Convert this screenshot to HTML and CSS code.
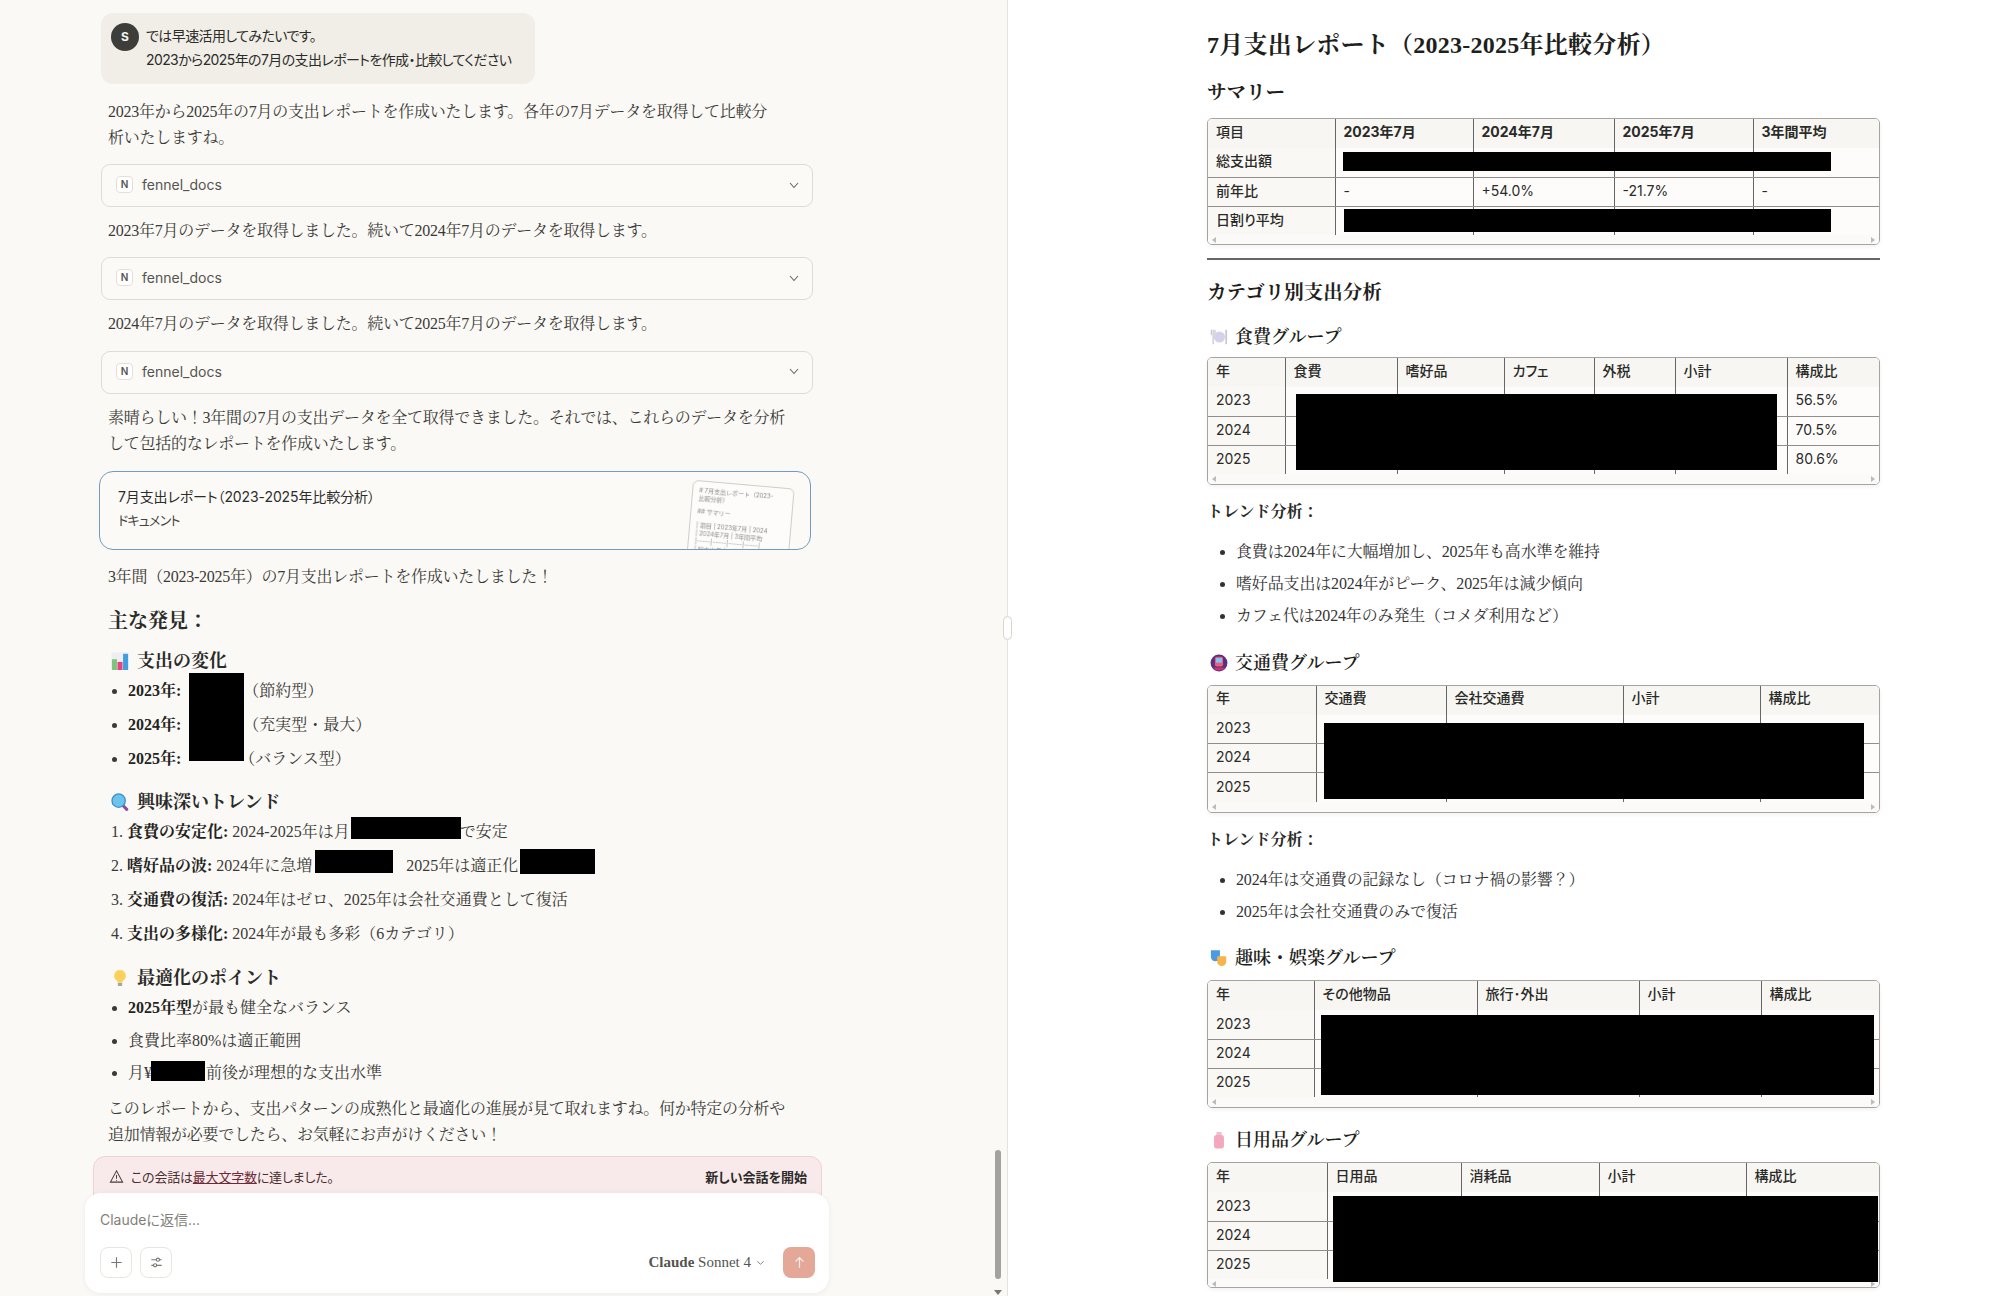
FILE: index.html
```html
<!DOCTYPE html>
<html lang="ja">
<head>
<meta charset="utf-8">
<title>7月支出レポート</title>
<link rel="stylesheet" href="styles.css">
</head>
<body>
<div class="app">
  <main class="chat">
    <div class="thread">
      <div class="bubble">
        <span class="avatar">S</span>
        <div class="bubble-text">では早速活用してみたいです。<br>2023から2025年の7月の支出レポートを作成・比較してください</div>
      </div>
      <p class="msg m-a">2023年から2025年の7月の支出レポートを作成いたします。各年の7月データを取得して比較分<br>析いたしますね。</p>
      <div class="tool"><span class="tool-n">N</span><span class="tool-name">fennel_docs</span><svg class="chev" viewBox="0 0 12 12"><path d="M2 4l4 4.5L10 4"/></svg></div>
      <p class="msg">2023年7月のデータを取得しました。続いて2024年7月のデータを取得します。</p>
      <div class="tool"><span class="tool-n">N</span><span class="tool-name">fennel_docs</span><svg class="chev" viewBox="0 0 12 12"><path d="M2 4l4 4.5L10 4"/></svg></div>
      <p class="msg">2024年7月のデータを取得しました。続いて2025年7月のデータを取得します。</p>
      <div class="tool"><span class="tool-n">N</span><span class="tool-name">fennel_docs</span><svg class="chev" viewBox="0 0 12 12"><path d="M2 4l4 4.5L10 4"/></svg></div>
      <p class="msg">素晴らしい！3年間の7月の支出データを全て取得できました。それでは、これらのデータを分析<br>して包括的なレポートを作成いたします。</p>
      <div class="artifact">
        <div class="artifact-text">
          <div class="artifact-title">7月支出レポート（2023-2025年比較分析）</div>
          <div class="artifact-sub">ドキュメント</div>
        </div>
        <div class="thumb">
          <div class="thumb-h"># 7月支出レポート（2023-<br>比較分析）</div>
          <div class="thumb-s">## サマリー</div>
          <div class="thumb-t">| 項目 | 2023年7月 | 2024<br>| 2024年7月 | 3年間平均<br>|-----|-----|-----|-----|<br>| 総支出額 | ... |</div>
        </div>
      </div>
      <p class="msg m-b">3年間（2023-2025年）の7月支出レポートを作成いたしました！</p>
      <h2 class="find">主な発見：</h2>
      <h3 class="sub"><svg class="emoji" viewBox="0 0 20 20"><rect x="0.500" y="0.500" width="19" height="19" fill="#efeff2"/><rect x="1" y="8" width="5.600" height="12" fill="#7cc47f"/><rect x="7.200" y="11" width="5.600" height="9" fill="#e8437c"/><rect x="13.400" y="2" width="5.600" height="18" fill="#3f9fe0"/></svg>支出の変化</h3>
      <div class="rel">
        <ul class="list tight-a">
          <li><b>2023年:</b><span class="gap-a"></span>（節約型）</li>
          <li><b>2024年:</b><span class="gap-a"></span>（充実型・最大）</li>
          <li><b>2025年:</b><span class="gap-b"></span>（バランス型）</li>
        </ul>
        <span class="redact r-spend"></span>
      </div>
      <h3 class="sub s2"><svg class="emoji" viewBox="0 0 20 20"><path d="M12.500 13l5 5.200" stroke="#8a4fa0" stroke-width="3.400" stroke-linecap="round"/><circle cx="8.500" cy="8.500" r="7.400" fill="#6cc4ee" stroke="#3a8fc4" stroke-width="1.400"/></svg>興味深いトレンド</h3>
      <div class="rel">
        <ol class="list numbered">
          <li><b>食費の安定化:</b> 2024-2025年は月<span class="gap-c"></span>で安定</li>
          <li><b>嗜好品の波:</b> 2024年に急増<span class="gap-d"></span>2025年は適正化</li>
          <li><b>交通費の復活:</b> 2024年はゼロ、2025年は会社交通費として復活</li>
          <li><b>支出の多様化:</b> 2024年が最も多彩（6カテゴリ）</li>
        </ol>
        <span class="redact r-food"></span>
        <span class="redact r-wave1"></span>
        <span class="redact r-wave2"></span>
      </div>
      <h3 class="sub s3"><svg class="emoji" viewBox="0 0 20 20"><path d="M10 1a6.400 6.400 0 0 0-3.600 11.700c.8.600 1 1.400 1 2.300h5.200c0-.9.200-1.700 1-2.300A6.400 6.400 0 0 0 10 1z" fill="#fbd15b"/><rect x="7.600" y="15.400" width="4.800" height="3.600" rx="1" fill="#a5a5a5"/></svg>最適化のポイント</h3>
      <div class="rel">
        <ul class="list tight-b">
          <li><b>2025年型</b>が最も健全なバランス</li>
          <li>食費比率80%は適正範囲</li>
          <li>月¥<span class="gap-e"></span>前後が理想的な支出水準</li>
        </ul>
        <span class="redact r-ideal"></span>
      </div>
      <p class="msg m-c">このレポートから、支出パターンの成熟化と最適化の進展が見て取れますね。何か特定の分析や<br>追加情報が必要でしたら、お気軽にお声がけください！</p>
    </div>

    <div class="alert">
      <svg class="alert-icon" viewBox="0 0 16 16"><path d="M8 2L1.500 14h13z"/><path d="M8 6.500v4M8 11.800v.8"/></svg>
      <span class="alert-text">この会話は<u>最大文字数</u>に達しました。</span>
      <span class="alert-action">新しい会話を開始</span>
    </div>
    <div class="composer">
      <div class="placeholder">Claudeに返信...</div>
      <div class="composer-row">
        <span class="icon-btn"><svg viewBox="0 0 16 16"><path d="M8 2.500v11M2.500 8h11"/></svg></span>
        <span class="icon-btn"><svg viewBox="0 0 16 16"><path d="M2.500 5h11M2.500 11h11"/><circle cx="9.500" cy="5" r="1.700" fill="#fff"/><circle cx="6.500" cy="11" r="1.700" fill="#fff"/></svg></span>
        <span class="model"><span class="model-a">Claude</span> Sonnet 4<svg viewBox="0 0 12 12"><path d="M2.500 4.500L6 8l3.500-3.500"/></svg></span>
        <span class="send"><svg viewBox="0 0 16 16"><path d="M8 13.500V3M3.800 7L8 2.800 12.200 7"/></svg></span>
      </div>
    </div>
    <div class="scrollbar"></div>
    <div class="scroll-arrow"></div>
  </main>

  <div class="divider"><span class="handle"></span></div>

  <article class="doc">
    <h1 class="doc-title">7月支出レポート（2023-2025年比較分析）</h1>
    <h2 class="doc-h2">サマリー</h2>
    <div class="tbl t-sum">
      <table>
        <colgroup><col class="c1"><col class="c2"><col class="c3"><col class="c4"><col></colgroup>
        <thead><tr><th class="plain">項目</th><th>2023年7月</th><th>2024年7月</th><th>2025年7月</th><th>3年間平均</th></tr></thead>
        <tbody>
          <tr><th>総支出額</th><td></td><td></td><td></td><td></td></tr>
          <tr><th>前年比</th><td>-</td><td>+54.0%</td><td>-21.7%</td><td>-</td></tr>
          <tr><th>日割り平均</th><td></td><td></td><td></td><td></td></tr>
        </tbody>
      </table>
      <div class="hscroll"><i class="al"></i><i class="ar"></i></div>
      <span class="redact r-s1"></span>
      <span class="redact r-s2"></span>
    </div>
    <hr class="rule">
    <h2 class="doc-h2 after-rule">カテゴリ別支出分析</h2>

    <h3 class="doc-h3"><svg class="emoji" viewBox="0 0 20 20"><path d="M1.500 2v6M3.500 2v16M5.500 2v6" stroke="#c9c9cf" stroke-width="1.400"/><circle cx="10.500" cy="10" r="6.200" fill="#d6d0ea"/><path d="M18 2v16" stroke="#c9c9cf" stroke-width="2"/></svg>食費グループ</h3>
    <div class="tbl t-food">
      <table>
        <colgroup><col class="c1"><col class="c2"><col class="c3"><col class="c4"><col class="c5"><col class="c6"><col></colgroup>
        <thead><tr><th>年</th><th>食費</th><th>嗜好品</th><th>カフェ</th><th>外税</th><th>小計</th><th>構成比</th></tr></thead>
        <tbody>
          <tr><td>2023</td><td></td><td></td><td></td><td></td><td></td><td>56.5%</td></tr>
          <tr><td>2024</td><td></td><td></td><td></td><td></td><td></td><td>70.5%</td></tr>
          <tr><td>2025</td><td></td><td></td><td></td><td></td><td></td><td>80.6%</td></tr>
        </tbody>
      </table>
      <div class="hscroll"><i class="al"></i><i class="ar"></i></div>
      <span class="redact r-t-food"></span>
    </div>
    <p class="trend">トレンド分析：</p>
    <ul class="doc-list">
      <li>食費は2024年に大幅増加し、2025年も高水準を維持</li>
      <li>嗜好品支出は2024年がピーク、2025年は減少傾向</li>
      <li>カフェ代は2024年のみ発生（コメダ利用など）</li>
    </ul>

    <h3 class="doc-h3 h-b"><svg class="emoji" viewBox="0 0 20 20"><circle cx="10" cy="10" r="9.400" fill="#5b2f7e"/><path d="M3 15a9 9 0 0 0 14 0z" fill="#c8326e"/><rect x="5.500" y="3" width="9" height="11" rx="2" fill="#ef5d7d"/><rect x="6.600" y="4.600" width="6.800" height="5" fill="#7ec7ee"/></svg>交通費グループ</h3>
    <div class="tbl t-trans">
      <table>
        <colgroup><col class="c1"><col class="c2"><col class="c3"><col class="c4"><col></colgroup>
        <thead><tr><th>年</th><th>交通費</th><th>会社交通費</th><th>小計</th><th>構成比</th></tr></thead>
        <tbody>
          <tr><td>2023</td><td></td><td></td><td></td><td></td></tr>
          <tr><td>2024</td><td></td><td></td><td></td><td></td></tr>
          <tr><td>2025</td><td></td><td></td><td></td><td></td></tr>
        </tbody>
      </table>
      <div class="hscroll"><i class="al"></i><i class="ar"></i></div>
      <span class="redact r-t-trans"></span>
    </div>
    <p class="trend">トレンド分析：</p>
    <ul class="doc-list">
      <li>2024年は交通費の記録なし（コロナ禍の影響？）</li>
      <li>2025年は会社交通費のみで復活</li>
    </ul>

    <h3 class="doc-h3 h-b"><svg class="emoji" viewBox="0 0 20 20"><path d="M1 1.500h10v7c0 3-2.200 5-5 5s-5-2-5-5z" fill="#4a9be0"/><path d="M8 8h10v6.500c0 2.500-2.200 4.500-5 4.500s-5-2-5-4.500z" fill="#f5b54a"/></svg>趣味・娯楽グループ</h3>
    <div class="tbl t-fun">
      <table>
        <colgroup><col class="c1"><col class="c2"><col class="c3"><col class="c4"><col></colgroup>
        <thead><tr><th>年</th><th>その他物品</th><th>旅行･外出</th><th>小計</th><th>構成比</th></tr></thead>
        <tbody>
          <tr><td>2023</td><td></td><td></td><td></td><td></td></tr>
          <tr><td>2024</td><td></td><td></td><td></td><td></td></tr>
          <tr><td>2025</td><td></td><td></td><td></td><td></td></tr>
        </tbody>
      </table>
      <div class="hscroll"><i class="al"></i><i class="ar"></i></div>
      <span class="redact r-t-fun"></span>
    </div>

    <h3 class="doc-h3 h-c"><svg class="emoji" viewBox="0 0 20 20"><rect x="7" y="1" width="6" height="4" rx="1" fill="#f0c0cc"/><rect x="4.500" y="4.500" width="11" height="15" rx="3" fill="#f3a8bd"/></svg>日用品グループ</h3>
    <div class="tbl t-daily">
      <table>
        <colgroup><col class="c1"><col class="c2"><col class="c3"><col class="c4"><col></colgroup>
        <thead><tr><th>年</th><th>日用品</th><th>消耗品</th><th>小計</th><th>構成比</th></tr></thead>
        <tbody>
          <tr><td>2023</td><td></td><td></td><td></td><td></td></tr>
          <tr><td>2024</td><td></td><td></td><td></td><td></td></tr>
          <tr><td>2025</td><td></td><td></td><td></td><td></td></tr>
        </tbody>
      </table>
      <div class="hscroll"><i class="al"></i><i class="ar"></i></div>
      <span class="redact r-t-daily"></span>
    </div>
  </article>
</div>
</body>
</html>
```
FILE: styles.css
```css
:root {
  --serif: "Liberation Serif", "Noto Serif CJK JP", "Noto Sans CJK JP", serif;
  --sans: "Inter", "Noto Sans CJK JP", sans-serif;
  --ink: #3a3a37;
}
* { box-sizing: border-box; }
html, body { margin: 0; height: 100%; overflow: hidden; }
body { background: #fff; color: var(--ink); font-family: var(--serif); }
.app { display: flex; width: 1998px; height: 1296px; }

/* Left: chat */
.chat { position: relative; width: 1007px; height: 1296px; background: #faf9f5; overflow: hidden; flex: none; }
.thread { display: flex; flex-direction: column; align-items: flex-start; padding: 13px 0 0 101px; width: 820px; }
.bubble { display: flex; gap: 7px; width: 434px; height: 71px; padding: 11px 10px 10px; background: #f0eee6; border-radius: 12px; }
.avatar { flex: none; width: 28px; height: 28px; margin-top: -1px; border-radius: 50%; background: #3d3d3a; color: #f5f4ef; font: 700 12px/28px var(--sans); text-align: center; }
.bubble-text { font: 14px/24px var(--sans); font-feature-settings: "palt"; color: #2c2c2a; white-space: nowrap; letter-spacing: -.6px; }
.msg { margin: 11px 0 0 7px; font-size: 16px; line-height: 26px; white-space: nowrap; letter-spacing: -.25px; }
.m-a { margin-top: 15px; }
.m-b { margin-top: 14.200px; }
.m-c { margin-top: 9.800px; }
.tool { display: flex; align-items: center; width: 712px; height: 43px; margin-top: 13.200px; padding: 0 12px 2px 14px; border: 1px solid #dedcd4; border-radius: 9px; background: #fbfaf7; }
.tool-n { width: 17px; height: 17px; margin-right: 9px; border: 1px solid #e2e0d8; border-radius: 4px; background: #fff; font: 600 10px/15px var(--sans); text-align: center; color: #555; }
.tool-name { font: 14px var(--sans); color: #55544f; }
.chev { width: 12px; height: 12px; margin-left: auto; margin-right: 0; fill: none; stroke: #666; stroke-width: 1.100; }
.artifact { position: relative; display: flex; width: 712px; height: 79px; margin-top: 14px; margin-left: -2px; padding: 13px 18px; border: 1.500px solid #6f9cc0; border-radius: 14px; background: #fbfaf7; overflow: hidden; }
.artifact-title { font: 14px/24px var(--sans); font-feature-settings: "palt"; color: #2c2c2a; white-space: nowrap; letter-spacing: -.1px; }
.artifact-sub { font: 13px/22px var(--sans); font-feature-settings: "palt"; color: #45443f; letter-spacing: -.8px; }
.thumb { position: absolute; left: 589px; top: 12px; width: 102px; height: 90px; padding: 5px 6px; border: 1px solid #cfcdc6; border-radius: 6px; background: #fdfcfa; transform: rotate(5deg); font: 6px/8px var(--sans); color: #8b8a85; white-space: nowrap; overflow: hidden; filter: blur(.3px); }
.thumb-s { margin-top: 5px; }
.thumb-t { margin-top: 6px; }
.find { margin: 17.500px 0 0 7px; font-size: 20px; line-height: 28px; font-weight: 700; color: #2b2b29; }
.sub { display: flex; align-items: center; gap: 8px; margin: 11.500px 0 0 10px; font-size: 18px; line-height: 28px; font-weight: 700; color: #2b2b29; }
.s2 { margin-top: 16px; }
.s3 { margin-top: 17px; }
.emoji { flex: none; width: 18px; height: 18px; }
.rel { position: relative; width: 720px; }
.list { margin: 3.400px 0 0; padding: 0 0 0 27px; font-size: 16px; line-height: 26px; }
.list li { margin-bottom: 7.800px; white-space: nowrap; }
.list li:last-child { margin-bottom: 0; }
.list b { color: #232321; }
.tight-b { margin-top: 3px; }
.tight-b li { margin-bottom: 6.500px; }
.numbered { padding-left: 10px; list-style-position: inside; }
.numbered li { margin-bottom: 8px; }
.gap-a { display: inline-block; width: 62px; }
.gap-b { display: inline-block; width: 58px; }
.gap-c { display: inline-block; width: 110px; }
.gap-d { display: inline-block; width: 94px; }
.gap-e { display: inline-block; width: 54px; }
.redact { position: absolute; background: #000; }
.r-spend { left: 88px; top: -2px; width: 55px; height: 88px; }
.r-food { left: 250px; top: 1px; width: 110px; height: 22px; }
.r-wave1 { left: 214px; top: 34px; width: 78px; height: 23px; }
.r-wave2 { left: 419px; top: 33px; width: 75px; height: 25px; }
.r-ideal { left: 50px; top: 69px; width: 54px; height: 20px; }

.alert { position: absolute; left: 93px; top: 1156px; display: flex; align-items: center; width: 729px; height: 60px; padding: 0 14px 20px 15px; background: #f8eaea; border: 1px solid #ecd4d4; border-radius: 12px; font: 13px var(--sans); font-feature-settings: "palt"; color: #4a2f2f; }
.alert-icon { width: 15px; height: 15px; margin-right: 7px; fill: none; stroke: #4a3a3a; stroke-width: 1.100; }
.alert-text { letter-spacing: -.2px; }
.alert-text u { color: #6b2a36; }
.alert-action { margin-left: auto; font-weight: 600; color: #2b2b29; }
.composer { position: absolute; left: 85px; top: 1193px; display: flex; flex-direction: column; width: 744px; height: 100px; padding: 16px 14px 15px 15px; background: #fff; border-radius: 16px; box-shadow: 0 1px 6px rgba(0, 0, 0, .06); }
.placeholder { font: 14px/22px var(--sans); font-feature-settings: "palt"; color: #807f79; }
.composer-row { display: flex; align-items: center; gap: 8px; margin-top: auto; }
.icon-btn { display: flex; align-items: center; justify-content: center; width: 32px; height: 31px; border: 1px solid #e8e6df; border-radius: 8px; background: #fff; }
.icon-btn svg { width: 15px; height: 15px; fill: none; stroke: #77766f; stroke-width: 1.200; }
.model { display: flex; align-items: center; margin-left: auto; margin-right: 9px; font: 15px var(--serif); color: #55544f; white-space: pre; }
.model-a { font-weight: 600; }
.model svg { width: 11px; height: 11px; margin-left: 4px; fill: none; stroke: #777; stroke-width: 1; }
.send { display: flex; align-items: center; justify-content: center; width: 32px; height: 31px; border-radius: 8px; background: #e3a898; }
.send svg { width: 15px; height: 15px; fill: none; stroke: #fbeee9; stroke-width: 1.300; }
.scrollbar { position: absolute; left: 995px; top: 1150px; width: 6px; height: 129px; border-radius: 3px; background: #a3a29d; }
.scroll-arrow { position: absolute; left: 994px; top: 1290px; border: 4px solid transparent; border-top: 5px solid #777; }

/* Divider */
.divider { position: relative; flex: none; width: 1px; background: #e4e2dc; }
.handle { position: absolute; left: -4px; top: 616px; width: 9px; height: 24px; border: 1px solid #d6d4cd; border-radius: 5px; background: #fff; }

/* Right: doc */
.doc { flex: 1; padding: 28px 118px 0 199px; background: #fff; color: #222; }
.doc-title { margin: 0; font-size: 24px; line-height: 34px; font-weight: 700; white-space: nowrap; color: #1f1f1d; letter-spacing: .25px; }
.doc-h2 { margin: 17px 0 11px; font-size: 19.500px; line-height: 28px; font-weight: 700; color: #1f1f1d; }
.after-rule { margin: 19px 0 0; }
.doc-h3 { display: flex; align-items: center; gap: 7px; margin: 16px 0 6px 3px; font-size: 18px; line-height: 28px; font-weight: 600; color: #1f1f1d; }
.h-b { margin-top: 20px; margin-bottom: 8px; }
.h-c { margin-top: 18px; margin-bottom: 8px; }
.rule { height: 2px; margin: 13px 0 0; border: 0; background: #666; }
.trend { margin: 14px 0 0; font-size: 16px; line-height: 26px; font-weight: 700; color: #2a2a28; }
.doc-list { margin: 14px 0 0; padding: 0 0 0 29px; font-size: 16px; line-height: 25.600px; color: #333; letter-spacing: -.15px; }
.doc-list li { margin-bottom: 6.500px; white-space: nowrap; }
.doc-list li:last-child { margin-bottom: 0; }

.tbl { position: relative; width: 673px; height: 128px; border: 1px solid #a5a4a0; border-radius: 5px; overflow: hidden; background: #fdfcfb; box-shadow: 0 2px 4px rgba(0, 0, 0, .05); }
.t-sum { height: 127px; }
.t-daily { height: 126px; }
.tbl table { width: 100%; border-collapse: collapse; table-layout: fixed; font: 14px/20px var(--sans); font-feature-settings: "palt"; }
.tbl th, .tbl td { height: 29px; padding: 0 8px 2px; border-right: 1px solid #666; border-bottom: 1px solid #8f8e8a; text-align: left; font-weight: 400; color: #2a2a28; white-space: nowrap; }
.tbl tr:last-child th, .tbl tr:last-child td { border-bottom: 0; }
.tbl th:last-child, .tbl td:last-child { border-right: 0; }
.tbl thead th { background: #f7f6f2; font-weight: 500; height: 29px; padding-bottom: 4px; }
.tbl tbody th, .tbl tbody td:first-child { background: #f9f8f5; }
.t-sum thead th { font-weight: 700; }
.t-sum thead th.plain { font-weight: 500; }
.t-sum tbody th { font-weight: 500; }
.hscroll { position: relative; height: 11px; background: #fbfaf8; }
.hscroll i { position: absolute; top: 2px; border: 3.500px solid transparent; }
.al { left: 1px; border-right: 4px solid #bbb !important; }
.ar { right: 1px; border-left: 4px solid #bbb !important; }

.t-sum .c1 { width: 127px; }
.t-sum .c2 { width: 138px; }
.t-sum .c3 { width: 141px; }
.t-sum .c4 { width: 139px; }
.t-food .c1 { width: 77px; }
.t-food .c2 { width: 112px; }
.t-food .c3 { width: 107px; }
.t-food .c4 { width: 90px; }
.t-food .c5 { width: 81px; }
.t-food .c6 { width: 112px; }
.t-trans .c1 { width: 108px; }
.t-trans .c2 { width: 130px; }
.t-trans .c3 { width: 177px; }
.t-trans .c4 { width: 137px; }
.t-fun .c1 { width: 106px; }
.t-fun .c2 { width: 163px; }
.t-fun .c3 { width: 162px; }
.t-fun .c4 { width: 122px; }
.t-daily .c1 { width: 119px; }
.t-daily .c2 { width: 134px; }
.t-daily .c3 { width: 138px; }
.t-daily .c4 { width: 147px; }

.r-s1 { left: 135px; top: 33px; width: 488px; height: 19px; }
.r-s2 { left: 136px; top: 90px; width: 487px; height: 23px; }
.r-t-food { left: 88px; top: 36px; width: 481px; height: 76px; }
.r-t-trans { left: 116px; top: 37px; width: 540px; height: 76px; }
.r-t-fun { left: 113px; top: 34px; width: 553px; height: 80px; }
.r-t-daily { left: 125px; top: 33px; width: 545px; height: 86px; }
```
